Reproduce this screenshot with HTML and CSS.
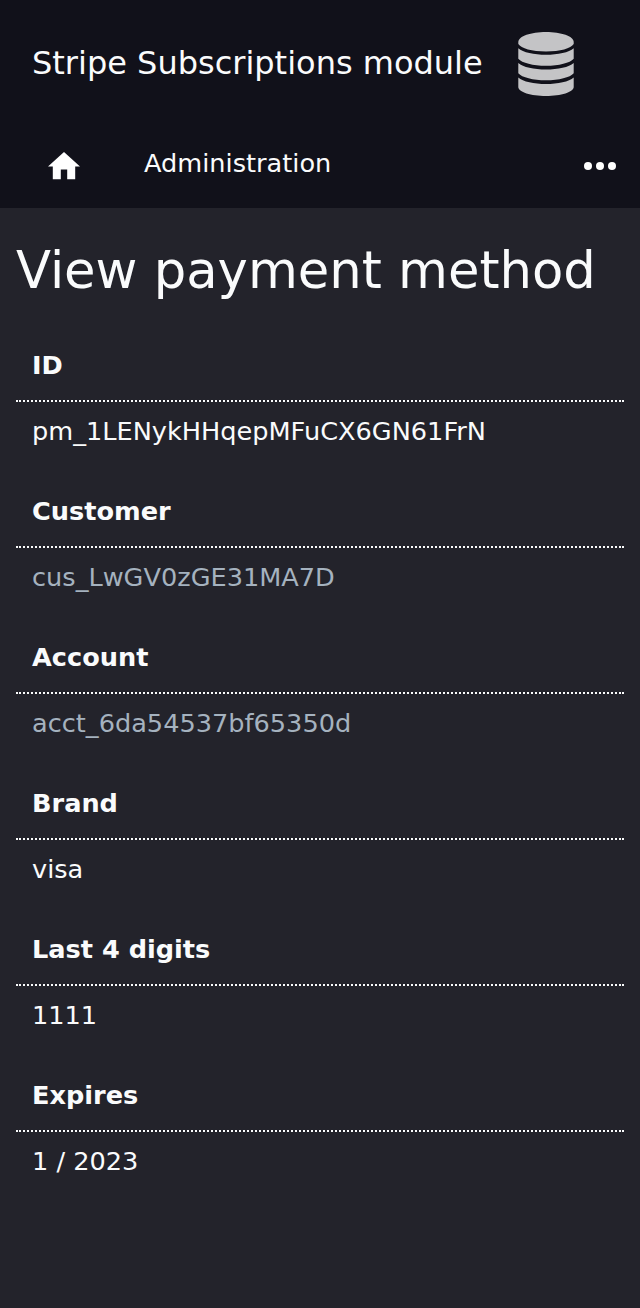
FILE: index.html
```html
<!DOCTYPE html>
<html lang="en">
<head>
<meta charset="utf-8">
<title>View payment method</title>
<link rel="stylesheet" href="styles.css">
</head>
<body>
<header class="header">
  <div class="brand">
    <span class="brand-name">Stripe Subscriptions module</span>
    <svg class="logo" viewBox="0 0 56 64"><path d="M28 0C43 0 55.7 4.2 55.7 10v2C53 16.500 42 19.500 28 19.500S3 16.500.3 12v-2C.3 4.200 13 0 28 0z"/><path d="M.3 16.300C5 20.500 16 22.800 28 22.800s23-2.300 27.700-6.500v10.400C52 31 41 33.700 28 33.700S4 31 .3 26.700z"/><path d="M.3 30.900C5 35.100 16 37.400 28 37.400s23-2.300 27.700-6.500v10.400C52 45.600 41 48.300 28 48.300S4 45.600.3 41.300z"/><path d="M.3 45.400C5 49.600 16 51.900 28 51.900s23-2.300 27.700-6.500V55C55.700 60 43 64 28 64S.3 60 .3 55z"/></svg>
  </div>
  <nav class="nav">
    <svg class="home" viewBox="2 3 20 17.500"><path d="M10 20v-6h4v6h5v-8h3L12 3 2 12h3v8z"/></svg>
    <a class="nav-link">Administration</a>
    <svg class="more" viewBox="0 0 32 8"><circle cx="4" cy="4" r="4"/><circle cx="16" cy="4" r="4"/><circle cx="28" cy="4" r="4"/></svg>
  </nav>
</header>
<main class="content">
  <h1 class="title">View payment method</h1>
  <dl class="details">
    <dt>ID</dt><dd>pm_1LENykHHqepMFuCX6GN61FrN</dd>
    <dt>Customer</dt><dd><a class="link">cus_LwGV0zGE31MA7D</a></dd>
    <dt>Account</dt><dd><a class="link">acct_6da54537bf65350d</a></dd>
    <dt>Brand</dt><dd>visa</dd>
    <dt>Last 4 digits</dt><dd>1111</dd>
    <dt>Expires</dt><dd>1 / 2023</dd>
  </dl>
</main>
</body>
</html>
```
FILE: styles.css
```css
body {
  margin: 0;
  min-height: 1308px;
  background: #23232b;
  color: #fafbfc;
  font-family: "DejaVu Sans", sans-serif;
  font-size: 25.6px;
}
.header { height: 208px; background: #11111a; }
.brand { display: flex; align-items: center; height: 128px; padding-left: 32px; }
.brand-name { width: 486px; font-size: 32px; line-height: 38px; padding-bottom: 2px; box-sizing: border-box; white-space: nowrap; }
.logo { width: 56px; height: 64px; fill: #c4c4c6; }
.nav { display: flex; height: 80px; padding: 0 24px 0 48px; align-items: flex-start; }
.home { width: 32px; height: 28px; margin: 24.4px 64px 0 0; fill: #fff; }
.nav-link { line-height: 30px; margin-top: 20px; }
.more { width: 32px; height: 8px; margin: 34px 0 0 auto; fill: #fff; }
.content { padding: 0 16px; }
.title { margin: 0; padding-top: 32px; font-size: 51.2px; font-weight: 400; line-height: 60px; white-space: nowrap; }
.details { margin: 30px 0 0; }
.details dt { box-sizing: border-box; height: 72px; padding: 20px 16px 0; border-bottom: 2px dotted #fafbfc; font-weight: 700; line-height: 30px; }
.details dd { height: 74px; margin: 0; padding: 14px 16px 0; box-sizing: border-box; line-height: 30px; }
.link { color: #a5b2bf; }
```
